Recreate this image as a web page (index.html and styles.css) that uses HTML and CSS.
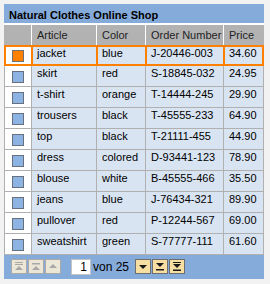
FILE: index.html
```html
<!DOCTYPE html>
<html lang="en">
<head>
  <meta charset="UTF-8" />
  <title>Natural Clothes Online Shop</title>
  <link rel="stylesheet" href="styles.css">
</head>

<body>
  <div class="grid">
    <div class="title">Natural Clothes Online Shop</div>

    <table class="rows">
      <thead>
        <tr>
          <th class="c-sel"></th>
          <th class="c-art">Article</th>
          <th class="c-col">Color</th>
          <th class="c-ord">Order Number</th>
          <th class="c-pr">Price</th>
        </tr>
      </thead>
      <tbody>
        <tr class="selected">
          <td class="sel"><span class="box"></span></td>
          <td>jacket</td><td>blue</td><td>J-20446-003</td><td>34.60</td>
        </tr>
        <tr>
          <td class="sel"><span class="box"></span></td>
          <td>skirt</td><td>red</td><td>S-18845-032</td><td>24.95</td>
        </tr>
        <tr>
          <td class="sel"><span class="box"></span></td>
          <td>t-shirt</td><td>orange</td><td>T-14444-245</td><td>29.90</td>
        </tr>
        <tr>
          <td class="sel"><span class="box"></span></td>
          <td>trousers</td><td>black</td><td>T-45555-233</td><td>64.90</td>
        </tr>
        <tr>
          <td class="sel"><span class="box"></span></td>
          <td>top</td><td>black</td><td>T-21111-455</td><td>44.90</td>
        </tr>
        <tr>
          <td class="sel"><span class="box"></span></td>
          <td>dress</td><td>colored</td><td>D-93441-123</td><td>78.90</td>
        </tr>
        <tr>
          <td class="sel"><span class="box"></span></td>
          <td>blouse</td><td>white</td><td>B-45555-466</td><td>35.50</td>
        </tr>
        <tr>
          <td class="sel"><span class="box"></span></td>
          <td>jeans</td><td>blue</td><td>J-76434-321</td><td>89.90</td>
        </tr>
        <tr>
          <td class="sel"><span class="box"></span></td>
          <td>pullover</td><td>red</td><td>P-12244-567</td><td>69.00</td>
        </tr>
        <tr>
          <td class="sel"><span class="box"></span></td>
          <td>sweatshirt</td><td>green</td><td>S-77777-111</td><td>61.60</td>
        </tr>
      </tbody>
    </table>

    <div class="pager">
      <button class="nav" disabled>
        <svg viewBox="0 0 14 13"><rect x="3" y="2" width="8" height="1"/><rect x="3" y="4" width="8" height="1"/><polygon points="7,6 11,10 3,10"/></svg>
      </button>
      <button class="nav" disabled>
        <svg viewBox="0 0 14 13"><rect x="3" y="3" width="8" height="1.5"/><polygon points="7,6 11,10 3,10"/></svg>
      </button>
      <button class="nav" disabled>
        <svg viewBox="0 0 14 13"><polygon points="7,4 11,8 3,8"/></svg>
      </button>

      <input class="page" type="text" value="1" />
      <span class="count">von 25</span>

      <button class="nav">
        <svg viewBox="0 0 14 13"><polygon points="3,5 11,5 7,9"/></svg>
      </button>
      <button class="nav">
        <svg viewBox="0 0 14 13"><polygon points="3,3 11,3 7,7"/><rect x="3" y="9" width="8" height="1.5"/></svg>
      </button>
      <button class="nav">
        <svg viewBox="0 0 14 13"><rect x="3" y="2" width="8" height="1"/><polygon points="3,4 11,4 7,8"/><rect x="3" y="9.5" width="8" height="1.5"/></svg>
      </button>
    </div>
  </div>
</body>
</html>
```

FILE: styles.css
```css
:root {
  --page: #f2f2f2;
  --blue: #85abdb;
  --head: #b2b2b2;
  --cell: #d9e4f3;
  --line: #b0b0b0;
  --sel: #ff8000;
}

* { box-sizing: border-box; }

body {
  margin: 0;
  background: var(--page);
  font-family: "Liberation Sans", Arial, sans-serif;
  font-size: 11px;
  color: #000;
}

.grid {
  width: 260px;
  margin: 4px;
}

.title {
  height: 21px;
  padding: 5px 5px 0;
  background: var(--blue);
  border-bottom: 2px solid #fff;
  font-weight: bold;
  line-height: 13px;
}

.rows {
  width: 260px;
  table-layout: fixed;
  border-collapse: separate;
  border-spacing: 0;
}

.rows th {
  height: 20px;
  padding: 0 5px;
  background: var(--head);
  border-right: 1px solid #fff;
  color: #222;
  font-weight: normal;
  text-align: left;
  line-height: 13px;
  white-space: nowrap;
  overflow: hidden;
}

.rows th:last-child { border-right: none; }

.c-sel { width: 28px; }
.c-art { width: 65px; }
.c-col { width: 49px; }
.c-ord { width: 78px; }
.c-pr  { width: 40px; }

.rows td {
  height: 21px;
  padding: 1px 5px 0;
  background: var(--cell);
  border-right: 1px solid var(--line);
  border-bottom: 1px solid var(--line);
  vertical-align: top;
  line-height: 13px;
  white-space: nowrap;
}

.rows td.sel {
  padding: 0;
  background: #fff;
  border-left: 1px solid var(--line);
}

.box {
  display: block;
  width: 12px;
  height: 12px;
  margin: 5px auto 0;
  background: #8db3e2;
  border: 1px solid #66707e;
}

.selected td {
  padding-top: 2px;
  border-color: var(--sel);
  box-shadow: inset 1px 2px 0 var(--sel), inset 0 -1px 0 var(--sel);
}

.selected td:last-child {
  box-shadow: inset 1px 2px 0 var(--sel), inset -1px -1px 0 var(--sel);
}

.selected td.sel { border-left-color: var(--sel); }

.selected .box {
  background: #ff7f00;
  border-color: #707070;
}

.pager {
  display: flex;
  align-items: flex-start;
  height: 24px;
  padding: 4px 0 0 7px;
  background: var(--blue);
}

.nav {
  all: unset;
  width: 16px;
  height: 15px;
  margin-right: 1px;
  box-sizing: border-box;
  background: #f7dfa2;
  border: 1px solid #6e6e6e;
  display: flex;
  align-items: center;
  justify-content: center;
}

.nav svg {
  width: 14px;
  height: 13px;
  fill: #1a1a1a;
}

.nav:disabled {
  background: #ece6d6;
  border-color: #aaa;
}

.nav:disabled svg { fill: #a8a8a8; }

.page {
  width: 20px;
  height: 16px;
  margin-left: 9px;
  padding: 0 3px 0 0;
  border: 1px solid #c4c4c4;
  background: #fff;
  font: inherit;
  font-size: 12px;
  text-align: right;
}

.count {
  margin: 1px 6px 0 2px;
  font-size: 12px;
  line-height: 14px;
}
```
